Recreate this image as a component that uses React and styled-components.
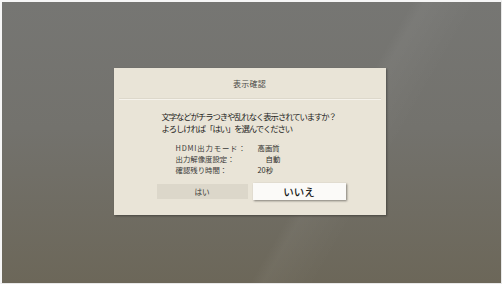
import React from "react";
import styled, { createGlobalStyle } from "styled-components";

const GlobalStyle = createGlobalStyle`
  html, body {
    margin: 0;
    padding: 0;
    background: #f4f4f4;
  }
  body {
    font-family: "Noto Sans CJK JP", "Noto Sans", sans-serif;
  }
`;

const info = [
  { label: "HDMI出力モード：", value: "高画質", wide: true },
  { label: "出力解像度設定：", value: "自動", indent: 8 },
  { label: "確認残り時間：", value: "20秒" },
];

function App() {
  return (
    <>
      <GlobalStyle />
      <Screen>
        <Dialog>
          <Title>表示確認</Title>
          <Divider />
          <Message>
            文字などがチラつきや乱れなく表示されていますか？
            <br />
            よろしければ「はい」を選んでください
          </Message>
          <InfoTable>
            {info.map((row) => (
              <InfoRow key={row.label}>
                <Label $wide={row.wide}>{row.label}</Label>
                <Value $indent={row.indent}>{row.value}</Value>
              </InfoRow>
            ))}
          </InfoTable>
          <Buttons>
            <Button>はい</Button>
            <Button $primary>いいえ</Button>
          </Buttons>
        </Dialog>
      </Screen>
    </>
  );
}

const Screen = styled.div`
  box-sizing: border-box;
  width: 502px;
  height: 284px;
  border-top: 2px solid #f6f6f6;
  border-left: 2px solid #f6f6f6;
  border-right: 1px solid #e8e8e8;
  border-bottom: 1px solid #e8e8e8;
  background:
    linear-gradient(120deg, transparent 62%, rgba(255, 255, 255, 0.04) 64%, transparent 72%),
    linear-gradient(180deg, #767673 0%, #73726d 45%, #6c6759 100%);
  display: flex;
  justify-content: center;
  padding-top: 66px;
  padding-right: 4px;
`;

const Dialog = styled.div`
  box-sizing: border-box;
  width: 272px;
  height: 147px;
  background: #e9e4d7;
  box-shadow: 1px 1px 2px rgba(0, 0, 0, 0.35);
  display: flex;
  flex-direction: column;
  padding: 10px 5px 0;
`;

const Title = styled.div`
  align-self: center;
  font-size: 8px;
  line-height: 12px;
  color: #4a4a46;
  letter-spacing: 0.2px;
`;

const Divider = styled.div`
  height: 1px;
  margin-top: 8px;
  background: #f6f3ec;
  border-top: 1px solid #ddd8cb;
`;

const Message = styled.div`
  margin-top: 10px;
  padding-left: 43px;
  font-size: 8.4px;
  line-height: 12px;
  letter-spacing: -1.1px;
  color: #1e1e1c;
  white-space: nowrap;
`;

const InfoTable = styled.div`
  margin-top: 8px;
  padding-left: 57px;
  display: flex;
  flex-direction: column;
`;

const InfoRow = styled.div`
  display: flex;
  font-size: 7.4px;
  line-height: 11.2px;
  color: #2f2f2c;
`;

const Label = styled.span`
  width: 82px;
  flex: none;
  letter-spacing: ${(p) => (p.$wide ? "0.8px" : "0")};
  color: #3a3a37;
`;

const Value = styled.span`
  padding-left: ${(p) => (p.$indent || 0)}px;
`;

const Buttons = styled.div`
  margin-top: 8px;
  display: flex;
  justify-content: center;
  gap: 5px;
  padding-left: 3px;
`;

const Button = styled.div`
  box-sizing: border-box;
  width: ${(p) => (p.$primary ? "93px" : "91px")};
  height: ${(p) => (p.$primary ? "17px" : "15px")};
  margin-top: ${(p) => (p.$primary ? "-1px" : "0")};
  display: flex;
  align-items: center;
  justify-content: center;
  background: ${(p) => (p.$primary ? "#fbfaf8" : "#dcd7ca")};
  box-shadow: ${(p) => (p.$primary ? "1px 1px 2px rgba(0, 0, 0, 0.45)" : "none")};
  font-size: ${(p) => (p.$primary ? "10.5px" : "7.6px")};
  font-weight: ${(p) => (p.$primary ? 500 : 400)};
  color: ${(p) => (p.$primary ? "#1a1a18" : "#3a3a37")};
`;

export default App;
